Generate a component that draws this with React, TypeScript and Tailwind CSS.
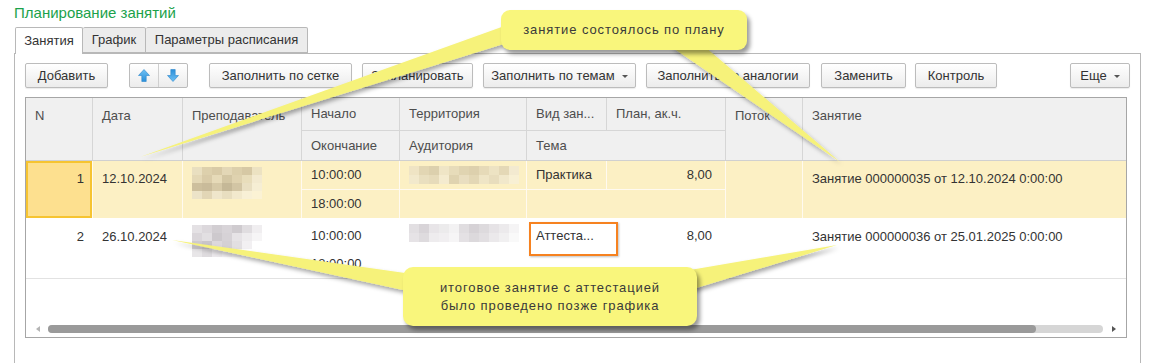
import React from 'react';

const COLS = 'grid grid-cols-[66px_89px_118px_97px_126px_79px_118px_76px_1fr]';

const YELLOW_MOSAIC = [
    ['#e9dfc0', '#ddd0ac', '#d8caa6', '#e3d7b6', '#dccfab', '#d6c8a4', '#ece2c2'],
    ['#e4d8b6', '#d9cba8', '#e6dab8', '#d3c6a3', '#dfd2af', '#e8ddbb', '#f3ead0'],
    ['#cdbf9d', '#c9bb9a', '#d6c9a7', '#c5b897', '#d2c5a4', '#e9dfc2', '#f6eed4'],
    ['#ece3c8', '#e2d6b6', '#efe6cb', '#e8dec0', '#f2e9cd', '#f8f0d6', '#fbf2d4'],
];

const GRAY_MOSAIC = [
    ['#e4e1e4', '#dcd8dc', '#d2ced2', '#d8d4d8', '#cfcbcf', '#e0dde0', '#f0eef0'],
    ['#dad6da', '#e2dfe2', '#cdc9cd', '#d6d2d6', '#e6e3e6', '#eeecee', '#f6f5f6'],
    ['#d0ccd0', '#c9c5c9', '#dcd8dc', '#d4d0d4', '#e2dfe2', '#f2f0f2', '#ffffff'],
    ['#e8e6e8', '#dedbde', '#ece9ec', '#f2f0f2', '#f7f6f7', '#ffffff', '#ffffff'],
];

const YELLOW_LINE = [
    ['#efe4c4', '#e2d6b3', '#dcd0ad', '#efe5c6', '#e7dcba', '#e0d4b1', '#ddd0ad', '#e6dab8', '#ede3c3', '#e4d8b6', '#f3ead0'],
    ['#f2e9cc', '#e9dfbf', '#e6dbba', '#f4ebcf', '#dfd3b0', '#e9dec0', '#e3d7b5', '#efe5c6', '#e8ddbd', '#f1e8cb', '#f8f0d4'],
];

const GRAY_LINE = [
    ['#e2dfe2', '#d8d4d8', '#e8e5e8', '#ecebec', '#f3f2f3', '#e0dde0', '#d6d2d6', '#dddadd', '#e6e3e6', '#eceaec', '#f5f4f5'],
    ['#e6e3e6', '#dedbde', '#eeecee', '#f1eff1', '#f6f5f6', '#e4e1e4', '#dcd9dc', '#e2dfe2', '#ebe9eb', '#f1f0f1', '#f9f9f9'],
];

function Mosaic({ rows, cell }: { rows: string[][]; cell: string }) {
    return (
        <div className="flex flex-col blur-[0.6px]">
            {rows.map((r, i) => (
                <div key={i} className="flex">
                    {r.map((c, j) => (
                        <div key={j} className={cell} style={{ backgroundColor: c }} />
                    ))}
                </div>
            ))}
        </div>
    );
}

function Btn({ w, children }: { w: string; children: React.ReactNode }) {
    return (
        <div className={`${w} h-[25px] shrink-0 flex items-center justify-center rounded-[2px] border border-[#bcbcbc] bg-gradient-to-b from-white to-[#ececec] shadow-[0_1px_1px_rgba(0,0,0,0.08)] text-[13px] text-[#333]`}>
            {children}
        </div>
    );
}

function Caret() {
    return <span className="ml-[7px] inline-block w-0 h-0 border-l-[3px] border-r-[3px] border-t-[3px] border-l-transparent border-r-transparent border-t-[#555] mt-[1px]" />;
}

function Arrow({ down }: { down?: boolean }) {
    return (
        <svg width="12" height="13" viewBox="0 0 12 13" className={down ? 'rotate-180' : ''}>
            <defs>
                <linearGradient id={down ? 'ad' : 'au'} x1="0" y1="0" x2="0" y2="1">
                    <stop offset="0" stopColor="#6ec1f5" />
                    <stop offset="1" stopColor="#2b8fd9" />
                </linearGradient>
            </defs>
            <path d="M6 0.5 L11.5 6.5 L8.2 6.5 L8.2 12.5 L3.8 12.5 L3.8 6.5 L0.5 6.5 Z" fill={`url(#${down ? 'ad' : 'au'})`} stroke="#2a86cc" strokeWidth="0.6" />
        </svg>
    );
}

const H = 'bg-[#f0f0f0] text-[13px] text-[#4d4d4d] pl-[9px]';
const Y = 'bg-[#fcf0c4] text-[13px] text-[#333] pl-[9px]';
const W = 'bg-white text-[13px] text-[#333] pl-[9px]';

export default function App() {
    return (
        <div className="relative w-[1152px] h-[363px] overflow-hidden bg-white font-['Liberation_Sans',Arial,sans-serif]">
            <div className="h-[27px] pl-[14px] pt-[4px] text-[15px] leading-[18px] text-[#1ba24b]">Планирование занятий</div>

            <div className="flex h-[26px] pl-[15px] text-[13px] text-[#333]">
                <div className="relative z-10 w-[68px] h-[27px] flex items-center justify-center border border-b-0 border-[#b8b8b8] rounded-t-[2px] bg-white">Занятия</div>
                <div className="w-[63px] h-[26px] flex items-center justify-center border border-l-0 border-[#b8b8b8] rounded-t-[2px] bg-[#ececec]">График</div>
                <div className="w-[162px] h-[26px] flex items-center justify-center border border-l-0 border-[#b8b8b8] rounded-t-[2px] bg-[#ececec]">Параметры расписания</div>
            </div>

            <div className="ml-[14px] w-[1127px] h-[310px] border border-b-0 border-[#b8b8b8] px-[10px] pt-[9px]">
                <div className="flex items-center h-[25px]">
                    <Btn w="w-[83px]">Добавить</Btn>
                    <div className="ml-[21px] w-[59px] h-[25px] flex rounded-[2px] border border-[#bcbcbc] bg-gradient-to-b from-white to-[#ececec]">
                        <div className="flex-1 flex items-center justify-center border-r border-[#cfcfcf]"><Arrow /></div>
                        <div className="flex-1 flex items-center justify-center"><Arrow down /></div>
                    </div>
                    <div className="ml-[21px]"><Btn w="w-[143px]">Заполнить по сетке</Btn></div>
                    <div className="ml-[10px]"><Btn w="w-[111px]">Запланировать</Btn></div>
                    <div className="ml-[10px]"><Btn w="w-[153px]">Заполнить по темам<Caret /></Btn></div>
                    <div className="ml-[10px]"><Btn w="w-[164px]">Заполнить по аналогии</Btn></div>
                    <div className="ml-[11px]"><Btn w="w-[85px]">Заменить</Btn></div>
                    <div className="ml-[9px]"><Btn w="w-[82px]">Контроль</Btn></div>
                    <div className="ml-auto"><Btn w="w-[60px]">Еще<Caret /></Btn></div>
                </div>

                <div className="mt-[9px] w-[1102px] h-[241px] border border-[#a6a6a6] flex flex-col">
                    {/* header */}
                    <div className={`${COLS} grid-rows-[32px_29px] gap-px bg-[#d6d6d6] border-b border-[#d0d0d0]`}>
                        <div className={`${H} row-span-2 pt-[8px]`}>N</div>
                        <div className={`${H} row-span-2 pt-[8px]`}>Дата</div>
                        <div className={`${H} row-span-2 pt-[8px]`}>Преподаватель</div>
                        <div className={`${H} flex items-center`}>Начало</div>
                        <div className={`${H} flex items-center`}>Территория</div>
                        <div className={`${H} flex items-center`}>Вид зан...</div>
                        <div className={`${H} flex items-center`}>План, ак.ч.</div>
                        <div className={`${H} row-span-2 pt-[8px]`}>Поток</div>
                        <div className={`${H} row-span-2 pt-[8px]`}>Занятие</div>
                        <div className={`${H} flex items-center`}>Окончание</div>
                        <div className={`${H} flex items-center`}>Аудитория</div>
                        <div className={`${H} col-span-2 flex items-center`}>Тема</div>
                    </div>

                    {/* row 1 */}
                    <div className={`${COLS} grid-rows-[28px_28px] gap-px bg-[#fffaf0]`}>
                        <div className="row-span-2 bg-[#fde08f] border-2 border-[#f6c431] text-[13px] text-[#333] flex justify-end pr-[6px] pt-[6px]">1</div>
                        <div className={`${Y} row-span-2 pt-[8px]`}>12.10.2024</div>
                        <div className={`${Y} row-span-2 pt-[6px] pl-[6px]`}>
                            <Mosaic rows={YELLOW_MOSAIC} cell="w-[10px] h-[8px]" />
                        </div>
                        <div className={`${Y} flex items-center`}>10:00:00</div>
                        <div className={`${Y} flex items-center pl-[6px]`}>
                            <Mosaic rows={YELLOW_LINE} cell="w-[10px] h-[9px]" />
                        </div>
                        <div className={`${Y} flex items-center`}>Практика</div>
                        <div className={`${Y} flex items-center justify-end pr-[13px]`}>8,00</div>
                        <div className={`${Y} row-span-2`} />
                        <div className={`${Y} row-span-2 pt-[8px]`}>Занятие 000000035 от 12.10.2024 0:00:00</div>
                        <div className={`${Y} flex items-center`}>18:00:00</div>
                        <div className={Y} />
                        <div className={`${Y} col-span-2`} />
                    </div>

                    {/* row 2 */}
                    <div className={`${COLS} grid-rows-[30px_29px] gap-px bg-white border-b border-[#e2e2e2]`}>
                        <div className={`${W} row-span-2 flex justify-end pr-[8px] pt-[9px]`}>2</div>
                        <div className={`${W} row-span-2 pt-[9px]`}>26.10.2024</div>
                        <div className={`${W} row-span-2 pt-[7px] pl-[6px]`}>
                            <Mosaic rows={GRAY_MOSAIC} cell="w-[10px] h-[8px]" />
                        </div>
                        <div className={`${W} flex items-end pb-[3px]`}>10:00:00</div>
                        <div className={`${W} flex items-end pb-[6px] pl-[8px]`}>
                            <Mosaic rows={GRAY_LINE} cell="w-[10px] h-[9px]" />
                        </div>
                        <div className={`${W} flex items-end pb-[3px]`}>Аттеста...</div>
                        <div className={`${W} flex items-end pb-[3px] justify-end pr-[13px]`}>8,00</div>
                        <div className={`${W} row-span-2`} />
                        <div className={`${W} row-span-2 pt-[9px]`}>Занятие 000000036 от 25.01.2025 0:00:00</div>
                        <div className={`${W} flex items-center`}>18:00:00</div>
                        <div className={W} />
                        <div className={`${W} col-span-2`} />
                    </div>

                    <div className="flex-1" />

                    {/* scrollbar */}
                    <div className="flex items-center h-[8px] mb-[4px] pl-[10px] pr-[10px]">
                        <span className="w-0 h-0 border-t-[3px] border-b-[3px] border-r-[4px] border-t-transparent border-b-transparent border-r-[#b5b5b5]" />
                        <div className="ml-[8px] flex-1 h-[8px] rounded-full bg-[#d6d6d6] mr-[9px]">
                            <div className="w-[988px] h-[8px] rounded-full bg-[#9a9a9a]" />
                        </div>
                        <span className="w-0 h-0 border-t-[3px] border-b-[3px] border-l-[4px] border-t-transparent border-b-transparent border-l-[#555]" />
                    </div>
                </div>
            </div>

            {/* annotations */}
            <div className="absolute left-[529px] top-[222px] w-[89px] h-[34px] border-2 border-[#f68220] shadow-[1px_1px_2px_rgba(0,0,0,0.25)]" />

            <svg className="absolute inset-0 pointer-events-none" width="1152" height="363">
                <defs>
                    <filter id="sh" x="-10%" y="-10%" width="130%" height="130%">
                        <feDropShadow dx="2" dy="3" stdDeviation="2" floodColor="#000" floodOpacity="0.35" />
                    </filter>
                </defs>
                <g fill="#f6f27a" filter="url(#sh)">
                    <polygon points="510,24 510,42 140,157" />
                    <polygon points="670,46 704,46 840,162" />
                    <polygon points="412,274 412,292 172,240" />
                    <polygon points="690,270 690,290 837,245" />
                </g>
            </svg>

            <div className="absolute left-[501px] top-[10px] w-[246px] h-[40px] rounded-[9px] bg-[#f9f67c] shadow-[3px_4px_4px_rgba(0,0,0,0.4)] flex items-center justify-center text-[13px] tracking-[0.9px] text-[#3a3a3a]">
                занятие состоялось по плану
            </div>
            <div className="absolute left-[403px] top-[267px] w-[294px] h-[59px] rounded-[10px] bg-[#f9f67c] shadow-[3px_4px_4px_rgba(0,0,0,0.4)] flex flex-col items-center justify-center text-[13px] leading-[18px] tracking-[0.9px] text-[#3a3a3a]">
                <div>итоговое занятие с аттестацией</div>
                <div>было проведено позже графика</div>
            </div>
        </div>
    );
}
